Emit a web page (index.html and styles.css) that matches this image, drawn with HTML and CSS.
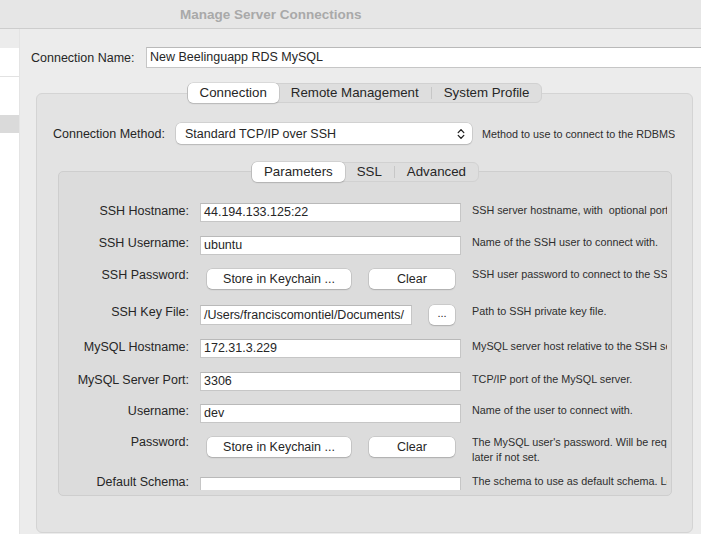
FILE: index.html
```html
<!DOCTYPE html>
<html>
<head>
<meta charset="utf-8">
<title>Manage Server Connections</title>
<link rel="stylesheet" href="styles.css">
</head>
<body>
<div class="window">
  <header class="titlebar"><span class="title">Manage Server Connections</span></header>
  <div class="main">
    <aside class="sidebar">
      <ul class="conn-list">
        <li class="item first"></li>
        <li class="item gap"></li>
        <li class="item selected"></li>
      </ul>
    </aside>
    <section class="content">
      <div class="name-row">
        <span class="name-label">Connection Name:</span>
        <div class="field name-field">New Beelinguapp RDS MySQL</div>
      </div>

      <div class="tabview outer">
        <div class="segmented">
          <span class="seg active">Connection</span>
          <span class="seg">Remote Management</span>
          <span class="sep"></span>
          <span class="seg">System Profile</span>
        </div>
        <div class="box outer-box">
          <div class="method-row">
            <span class="method-label">Connection Method:</span>
            <div class="select">
              <span class="select-text">Standard TCP/IP over SSH</span>
              <svg class="chevron" width="8" height="12" viewBox="0 0 8 12"><path d="M1.2 4.6 L4 1.6 L6.8 4.6 M1.2 7.4 L4 10.4 L6.8 7.4" fill="none" stroke="#1f1f1f" stroke-width="1.3" stroke-linecap="round" stroke-linejoin="round"/></svg>
            </div>
            <span class="desc method-desc">Method to use to connect to the RDBMS</span>
          </div>

          <div class="tabview inner">
            <div class="segmented small">
              <span class="seg active">Parameters</span>
              <span class="seg">SSL</span>
              <span class="sep"></span>
              <span class="seg">Advanced</span>
            </div>
            <div class="box inner-box">
              <div class="form-scroll">
                <div class="form">
                  <span class="label">SSH Hostname:</span>
                  <div class="field input">44.194.133.125:22</div>
                  <span class="desc">SSH server hostname, with&nbsp; optional port number.</span>

                  <span class="label">SSH Username:</span>
                  <div class="field input o1">ubuntu</div>
                  <span class="desc">Name of the SSH user to connect with.</span>

                  <span class="label">SSH Password:</span>
                  <div class="btn-group o2">
                    <span class="btn keychain">Store in Keychain ...</span>
                    <span class="btn clear">Clear</span>
                  </div>
                  <span class="desc">SSH user password to connect to the SSH tunnel.</span>

                  <span class="label">SSH Key File:</span>
                  <div class="file-group o1">
                    <div class="field input key-input">/Users/franciscomontiel/Documents/</div>
                    <span class="btn dots">...</span>
                  </div>
                  <span class="desc">Path to SSH private key file.</span>

                  <span class="label">MySQL Hostname:</span>
                  <div class="field input">172.31.3.229</div>
                  <span class="desc">MySQL server host relative to the SSH server.</span>

                  <span class="label">MySQL Server Port:</span>
                  <div class="field input">3306</div>
                  <span class="desc">TCP/IP port of the MySQL server.</span>

                  <span class="label">Username:</span>
                  <div class="field input o1">dev</div>
                  <span class="desc">Name of the user to connect with.</span>

                  <span class="label">Password:</span>
                  <div class="btn-group o3">
                    <span class="btn keychain">Store in Keychain ...</span>
                    <span class="btn clear">Clear</span>
                  </div>
                  <span class="desc two">The MySQL user's password. Will be requested<br>later if not set.</span>

                  <span class="label">Default Schema:</span>
                  <div class="field input o3"></div>
                  <span class="desc">The schema to use as default schema. Leave<br>blank to select it later.</span>
                </div>
              </div>
            </div>
          </div>
        </div>
      </div>
    </section>
  </div>
</div>
</body>
</html>
```

FILE: styles.css
```css
* { box-sizing: border-box; margin: 0; padding: 0; }

html, body {
  width: 701px;
  height: 534px;
  overflow: hidden;
}

body {
  font-family: "Liberation Sans", Arial, sans-serif;
  font-size: 12.5px;
  color: #262626;
  background: #ececec;
}

.window {
  display: flex;
  flex-direction: column;
  height: 534px;
}

/* title bar */
.titlebar {
  flex: none;
  height: 29px;
  background: #e6e6e6;
  border-bottom: 1px solid #cdcdcd;
  display: flex;
  align-items: center;
  padding-left: 180px;
}
.title {
  font-weight: bold;
  font-size: 13.5px;
  color: #a9a9a9;
}

.main {
  flex: 1;
  display: flex;
  min-height: 0;
}

/* sidebar list (cut off) */
.sidebar {
  flex: none;
  width: 20px;
  padding-top: 19px;
  border-right: 1px solid #e4e4e4;
}
.conn-list {
  list-style: none;
  background: #fff;
  height: 100%;
}
.conn-list .first { height: 29px; border-bottom: 1px solid #e2e2e2; }
.conn-list .gap { height: 38px; }
.conn-list .selected { height: 18px; background: #dadada; }

/* content */
.content {
  flex: 1;
  min-width: 0;
  display: flex;
  flex-direction: column;
  padding: 18px 8px 0 0;
  overflow: hidden;
}

.name-row {
  display: flex;
  align-items: center;
  height: 21px;
  margin-left: 11px;
  margin-right: -30px;
}
.name-label {
  flex: none;
  width: 115px;
}

.field {
  background: #fff;
  border: 1px solid #c6c6c6;
  border-top-color: #b9b9b9;
  padding: 0 3px;
  white-space: nowrap;
  overflow: hidden;
}
.name-field {
  flex: 1;
  height: 21px;
  line-height: 19px;
}

/* tab views */
.tabview {
  display: flex;
  flex-direction: column;
}
.tabview.outer {
  flex: 1;
  margin-top: 15px;
  margin-left: 16px;
  padding-bottom: 1px;
}
.segmented {
  align-self: center;
  position: relative;
  z-index: 1;
  display: flex;
  align-items: center;
  height: 20px;
  background: #dedede;
  border: 1px solid #d1d1d1;
  border-radius: 6px;
  font-size: 13.3px;
}
.seg {
  height: 20px;
  margin: -1px 0;
  line-height: 20px;
  padding: 0 12px;
  border-radius: 5px;
}
.seg.active {
  background: #fff;
  box-shadow: 0 0 0 0.5px rgba(0, 0, 0, 0.16), 0 1px 1.5px rgba(0, 0, 0, 0.12);
}
.sep {
  width: 1px;
  height: 12px;
  background: #c7c7c7;
}

.box {
  border-radius: 6px;
}
.outer-box {
  flex: 1;
  margin-top: -10px;
  background: #e3e3e3;
  border: 1px solid #d4d4d4;
  padding-top: 29px;
}

.method-row {
  display: flex;
  align-items: center;
  height: 21px;
  padding-left: 16px;
}
.method-label {
  flex: none;
  width: 123px;
}
.select {
  flex: none;
  width: 296px;
  height: 21px;
  display: flex;
  align-items: center;
  justify-content: space-between;
  padding: 0 7px 0 9px;
  background: #fff;
  border-radius: 5px;
  box-shadow: 0 0 0 0.5px rgba(0, 0, 0, 0.16), 0 1px 1.5px rgba(0, 0, 0, 0.12);
}
.chevron { display: block; }
.method-desc {
  margin-left: 10px;
}

.tabview.inner {
  margin: 18px 20px 0 21px;
}
.inner-box {
  margin-top: -11px;
  background: #dcdcdc;
  border: 1px solid #cecece;
  border-radius: 5px;
  padding-bottom: 5px;
}
.form-scroll {
  height: 318px;
  padding: 31px 4px 0 0;
  overflow: hidden;
}
.form {
  display: grid;
  grid-template-columns: 130px 261px 1fr;
  grid-template-rows: 32px 32px 37px 35px 33px 31px 31px 40px 40px;
  column-gap: 11px;
  align-items: start;
}
.label {
  text-align: right;
  line-height: 16px;
  white-space: nowrap;
}
.input {
  height: 19px;
  line-height: 17px;
}
.o1 { margin-top: 1px; }
.o2 { margin-top: 2px; }
.o3 { margin-top: 3px; }

.desc {
  font-size: 10.8px;
  line-height: 14px;
  color: #2e2e2e;
  white-space: nowrap;
  overflow: hidden;
  min-width: 0;
}
.desc.two { line-height: 15px; padding-top: 1px; }

.btn-group {
  display: flex;
  gap: 18px;
  padding-left: 7px;
}
.btn {
  display: block;
  height: 20px;
  line-height: 20px;
  text-align: center;
  background: #fff;
  border-radius: 5px;
  box-shadow: 0 0 0 0.5px rgba(0, 0, 0, 0.16), 0 1px 1.5px rgba(0, 0, 0, 0.14);
}
.btn.keychain { width: 144px; }
.btn.clear { width: 86px; }

.file-group {
  display: flex;
  align-items: flex-start;
  gap: 17px;
}
.key-input {
  width: 212px;
  height: 20px;
  line-height: 18px;
}
.btn.dots {
  width: 26px;
  line-height: 16px;
  font-size: 11px;
}
```
